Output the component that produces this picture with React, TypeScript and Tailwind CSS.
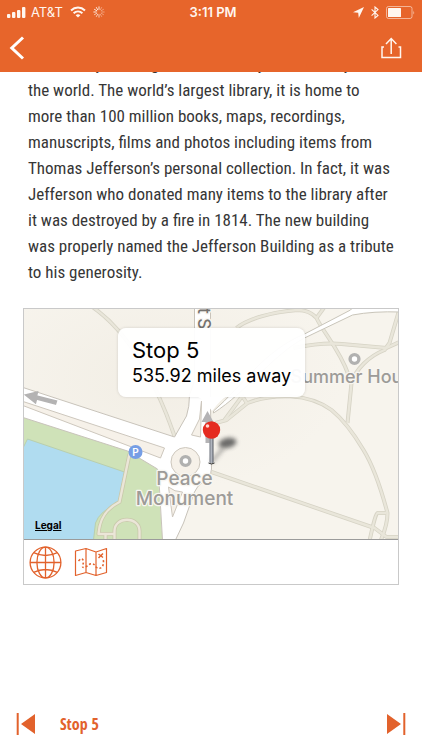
import React from "react";

const storyLines = [
  "The Library of Congress is certainly a fine library in",
  "the world. The world’s largest library, it is home to",
  "more than 100 million books, maps, recordings,",
  "manuscripts, films and photos including items from",
  "Thomas Jefferson’s personal collection. In fact, it was",
  "Jefferson who donated many items to the library after",
  "it was destroyed by a fire in 1814. The new building",
  "was properly named the Jefferson Building as a tribute",
  "to his generosity.",
];

function StatusBar() {
  return (
    <div className="grid h-6 grid-cols-3 items-center px-[7px] font-[Inter,sans-serif] text-[13px] leading-6">
      <div className="flex items-center gap-[5px]">
        <svg width="19" height="11" viewBox="0 0 19 11" fill="currentColor" aria-hidden="true">
          <rect x="0" y="7" width="3.4" height="4" rx="1" />
          <rect x="5" y="5" width="3.4" height="6" rx="1" />
          <rect x="10" y="3" width="3.4" height="8" rx="1" />
          <rect x="15" y="0" width="3.4" height="11" rx="1" />
        </svg>
        <span>AT&amp;T</span>
        <svg className="ml-0.5" width="16" height="12" viewBox="0 0 16 12" fill="none" stroke="currentColor" strokeWidth="2" aria-hidden="true">
          <path d="M1 4.4C5 .6 11 .6 15 4.4" />
          <path d="M3.6 7.2C6.2 4.8 9.8 4.8 12.4 7.2" />
          <path d="M8 11.6 5.6 9.2Q8 7.2 10.4 9.2Z" fill="currentColor" stroke="none" />
        </svg>
        <svg className="ml-0.5" width="12" height="12" viewBox="0 0 12 12" stroke="currentColor" strokeWidth="1" strokeLinecap="round" aria-hidden="true">
          <path d="M6 .8V3.4M3.4 1.5 4.7 3.8M1.5 3.4 3.8 4.7M.8 6H3.4" opacity=".9" />
          <path d="M1.5 8.6 3.8 7.3M3.4 10.5 4.7 8.2M6 11.2V8.6" opacity=".7" />
          <path d="M8.6 10.5 7.3 8.2M10.5 8.6 8.2 7.3M11.2 6H8.6M10.5 3.4 8.2 4.7M8.6 1.5 7.3 3.8" opacity=".4" />
        </svg>
      </div>
      <div className="whitespace-nowrap pl-1 text-center font-semibold">3:11 PM</div>
      <div className="flex items-center justify-end gap-[7px]">
        <svg width="11" height="11" viewBox="0 0 11 11" fill="currentColor" aria-hidden="true">
          <path d="M11 0 5.8 11 5.2 5.8 0 5.2Z" />
        </svg>
        <svg width="8" height="13" viewBox="0 0 8 13" fill="none" stroke="currentColor" strokeWidth="1.1" aria-hidden="true">
          <path d="M.6 3.4 7 9.4 4 12V1L7 3.6.6 9.6" />
        </svg>
        <svg width="29" height="13" viewBox="0 0 29 13" aria-hidden="true">
          <rect x=".5" y=".5" width="25.5" height="12" rx="2" fill="none" stroke="currentColor" opacity=".55" />
          <rect x="2" y="2" width="13" height="9" rx=".6" fill="currentColor" />
          <path d="M27.3 4.4Q29 6.5 27.3 8.6Z" fill="currentColor" opacity=".6" />
        </svg>
      </div>
    </div>
  );
}

function Header() {
  return (
    <header className="relative z-10 bg-[#e7652b] text-[#fff6ef]">
      <StatusBar />
      <nav className="flex h-12 items-center justify-between pl-[9px] pr-5">
        <button type="button" aria-label="Back" className="block">
          <svg width="16" height="24" viewBox="0 0 16 24" fill="none" stroke="#fff" strokeWidth="3">
            <path d="M14 1.5 2.8 12 14 22.5" />
          </svg>
        </button>
        <button type="button" aria-label="Share" className="block">
          <svg width="22" height="22" viewBox="0 0 22 22" fill="none" stroke="currentColor" strokeWidth="1.5">
            <path d="M4 10H2V20.5H20.5V10H18.5" />
            <path d="M11.2 17V2M6 7 11.2 1.6 16.4 7" />
          </svg>
        </button>
      </nav>
    </header>
  );
}

const footpaths = [
  "M213 19C224 10 248 3 274 1Q286 1 293 9C300 24 316 40 325 66",
  "M301-2 293 9",
  "M270 39Q300 33 318 35L363 39 376 33",
  "M376 0 366 34 361 41C346 47 332 60 328 74L324 114",
  "M192 114 203 111 224 94C250 84 285 84 308 101Q324 114 340 141C348 154 356 174 364 204Q364 216 357 232",
  "M201 111 218 88M218 86 224 95",
  "M188 163 351 219 363 228H377",
  "M363 204H354Q352 204 346 232",
  "M69-2Q118 32 151 127",
];

const gardenPath =
  "M106 145 96 193C82 200 76 210 75 225H91M91 231V222C91 207 116 207 116 222V231M82 226V231";

function MapDrawing() {
  return (
    <svg
      className="block h-full w-full"
      viewBox="0 0 375 230"
      preserveAspectRatio="xMidYMid slice"
      role="img"
      aria-label="Map of the streets around Peace Monument"
    >
      <defs>
        <radialGradient id="land" cx=".35" cy=".3" r=".5">
          <stop offset="0" stopColor="#f2eee5" />
          <stop offset="1" stopColor="#f7f4ed" />
        </radialGradient>
        <linearGradient id="needle">
          <stop offset="0" stopColor="#666b75" />
          <stop offset=".45" stopColor="#b9bec7" />
          <stop offset="1" stopColor="#555a63" />
        </linearGradient>
        <filter id="soft" x="-50%" y="-50%" width="200%" height="200%">
          <feGaussianBlur stdDeviation="2" />
        </filter>
      </defs>
      <rect width="375" height="230" fill="url(#land)" />

      <g fill="none" strokeLinejoin="round">
        <g stroke="#d6d3c5" strokeWidth="4">
          {footpaths.map((d) => (
            <path key={d} d={d} />
          ))}
        </g>
        <g stroke="#e9e6da" strokeWidth="2.4">
          {footpaths.map((d) => (
            <path key={d} d={d} />
          ))}
        </g>
      </g>

      <path d="M190 102C220 76 240 42 281 25L327 1 330-2H377V3Q350 2 329 6L281 29C250 45 222 84 190 104Z" fill="#fff" stroke="#c9c5ba" />

      <path d="M-2 108 104 141 134 160 139 231H-2Z" fill="#cfe2b8" />
      <path d="M4 130 101 163 95 194Q76 202 72 214L70 231H-2V142Z" fill="#b0dcf0" stroke="#b9cfae" />
      <g fill="none" strokeLinejoin="round">
        <path d={gardenPath} stroke="#c9c9ab" strokeWidth="4" />
        <path d={gardenPath} stroke="#ebe6d8" strokeWidth="2.4" />
      </g>

      <path
        d="M-2 78 151 128 163 107Q166 98 166 86L171 72V-2H187V96L188 160Q187 168 181 172 173 177 171 183L160 214 152 231H139L136 180 134 160 104 142-2 108Z"
        fill="#fff"
        stroke="#c8c3ba"
      />
      <g fill="#f6f1e9" stroke="#cdc7bd" strokeLinejoin="round">
        <path d="M-2 92 141 139 137 149-2 96Z" />
        <path d="M178 92 177 128 168 126 176 110Z" />
        <path d="M145 178Q151 183 159 183L149 208Z" />
        <circle cx="162" cy="153" r="14.5" />
      </g>

      <path d="M32 95 13 90 12 94 2 86 14 83 13 87 33 92Z" fill="#b4b3b3" stroke="#b4b3b3" strokeWidth="1.5" />
      <path d="M184 102 190 113H186V134H182V113H178Z" fill="#b4b3b5" />

      <circle cx="112" cy="143" r="7" fill="#769ee5" />
      <text x="112" y="147" textAnchor="middle" className="fill-white font-[Inter,sans-serif] text-[10px] font-semibold">P</text>

      <g fill="#fff" stroke="#b1b1b0" strokeWidth="3.4">
        <circle cx="162" cy="152" r="4.4" />
        <circle cx="331" cy="50" r="4.4" />
      </g>

      <g
        className="font-[Inter,sans-serif] font-medium"
        fill="#9d9b98"
        stroke="#f8f6f1"
        strokeWidth="2.5"
        strokeLinejoin="round"
        paintOrder="stroke"
      >
        <text x="161" y="176" textAnchor="middle" className="text-[19px]">Peace</text>
        <text x="161" y="196" textAnchor="middle" className="text-[19px]">Monument</text>
        <text x="267" y="74" className="text-[18px]">Summer House</text>
        <text x="-1" y="-174" transform="rotate(90)" fill="#75726f" className="text-[17px]">t S</text>
      </g>

      <path d="M188 153 200 139" stroke="#555" strokeWidth="3" opacity=".5" filter="url(#soft)" />
      <ellipse cx="204" cy="134" rx="9" ry="5" fill="#484848" opacity=".8" transform="rotate(-12 204 134)" filter="url(#soft)" />
      <rect x="186" y="128" width="4" height="26" rx="1" fill="url(#needle)" />
      <path d="M185 154Q188 156 191 154" stroke="#333" fill="none" />
      <circle cx="188" cy="121" r="8.7" fill="#e52b20" />
      <circle cx="184" cy="117" r="1.8" fill="#ffd5cf" />
    </svg>
  );
}

function MapCard() {
  return (
    <section className="mx-[23px] mt-[23px] border border-[#c9c9c9]" aria-label="Map">
      <div className="relative h-[231px] overflow-hidden border-b border-[#9b9b9b]">
        <MapDrawing />
        <div className="absolute left-1/2 top-[19px] -ml-[93px] h-[69px] w-[187px] rounded-lg bg-white/95 pl-[14px] pt-2 font-[Inter,sans-serif] text-black shadow-[0_0_3px_rgba(0,0,0,0.15)]">
          <p className="text-[22px] leading-7">Stop 5</p>
          <p className="whitespace-nowrap text-[18px] leading-6">535.92 miles away</p>
          <svg className="absolute left-[80px] top-full" width="28" height="14" viewBox="0 0 28 14" aria-hidden="true">
            <path d="M0 0H28Q24 1 14 14 4 1 0 0Z" fill="#fff" />
          </svg>
        </div>
        <a href="#legal" className="absolute bottom-2 left-[11px] font-[Inter,sans-serif] text-[10px] font-bold leading-3 text-black underline">
          Legal
        </a>
      </div>
      <div className="flex h-11 items-center gap-3 px-[5px] text-[#e2622c]">
        <button type="button" aria-label="Globe view" className="block">
          <svg width="33" height="33" viewBox="0 0 33 33" fill="none" stroke="currentColor" strokeWidth="1.3">
            <circle cx="16.5" cy="16.5" r="15.4" />
            <ellipse cx="16.5" cy="16.5" rx="8.6" ry="15.4" />
            <path d="M16.5 1V32M1 16.5H32M4.6 6.6Q16.5 12.4 28.4 6.6M4.6 26.4Q16.5 20.6 28.4 26.4" />
          </svg>
        </button>
        <button type="button" aria-label="Route map" className="block">
          <svg width="34" height="30" viewBox="0 0 34 30" fill="none" stroke="currentColor" strokeWidth="1.2" strokeLinejoin="round">
            <path d="M1.5 4 12 1.5 22 5 32.5 1.5V25.5L22 28.5 12 25.5 1.5 28.5ZM12 1.5V25.5M22 5V28.5" />
            <path d="M4.5 14Q8 10 9.5 14C10 17 6 21 11 20.5L16 17Q20 16 22 20C27 24 31 18 29 12" strokeWidth="1.6" strokeDasharray="2 2" />
            <path d="M24.5 7 29 10.5M29 6.5 24.5 11" strokeWidth="1.5" />
          </svg>
        </button>
      </div>
    </section>
  );
}

function Footer() {
  return (
    <footer className="flex h-[52px] items-center bg-white px-4 text-[#e2622c]">
      <button type="button" aria-label="Previous stop" className="block">
        <svg width="20" height="24" viewBox="0 0 20 24" fill="currentColor">
          <path d="M.7 1H2.7V23H.7ZM19 2V22L5 12Z" />
        </svg>
      </button>
      <span className="ml-6 font-['Open_Sans_Condensed','Roboto_Condensed','Liberation_Sans',sans-serif] text-[16px] font-bold leading-6">
        Stop 5
      </span>
      <button type="button" aria-label="Next stop" className="ml-auto block">
        <svg width="20" height="24" viewBox="0 0 20 24" fill="currentColor">
          <path d="M17.3 1H19.3V23H17.3ZM1 2V22L15 12Z" />
        </svg>
      </button>
    </footer>
  );
}

export default function App() {
  return (
    <div className="flex min-h-screen flex-col overflow-hidden bg-white">
      <Header />
      <main className="flex-1">
        <p className="-mt-[21px] px-7 font-['Roboto_Condensed','Liberation_Sans_Narrow','Liberation_Sans',sans-serif] text-[17px] leading-[26px] text-[#363636]">
          {storyLines.map((line) => (
            <span key={line} className="block whitespace-nowrap">
              {line}
            </span>
          ))}
        </p>
        <MapCard />
      </main>
      <Footer />
    </div>
  );
}
